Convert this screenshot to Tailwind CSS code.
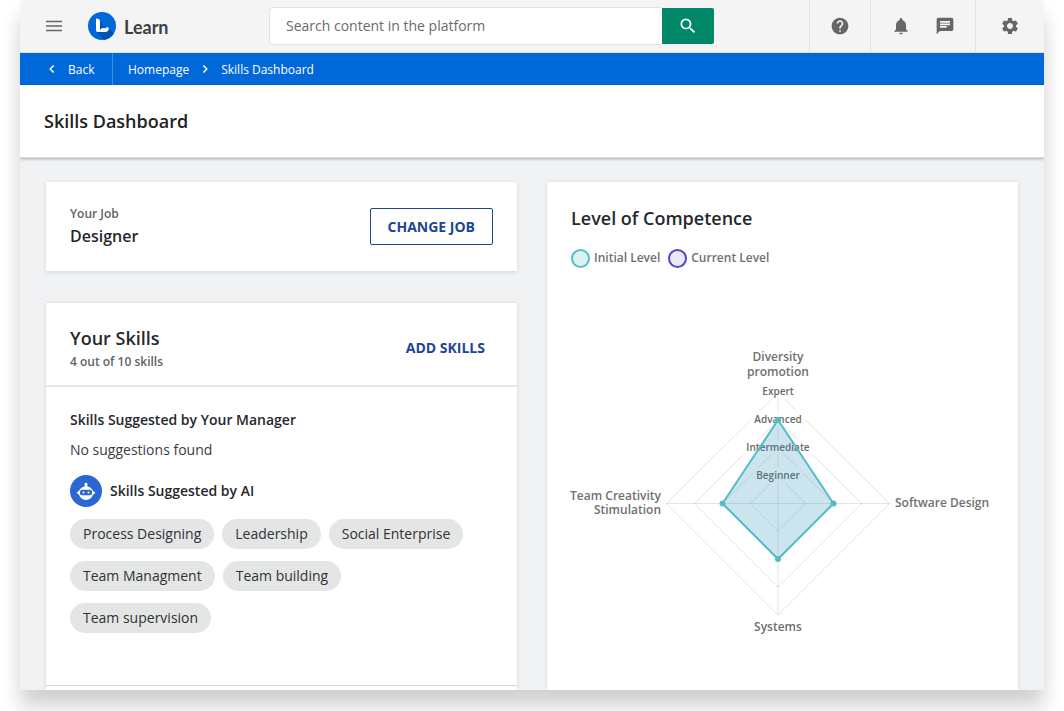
<!DOCTYPE html>
<html lang="en">
<head>
<meta charset="utf-8">
<meta name="viewport" content="width=device-width, initial-scale=1">
<title>Skills Dashboard</title>
<script src="https://cdn.jsdelivr.net/npm/@tailwindcss/browser@4"></script>
</head>
<body class="bg-white font-['Open_Sans',sans-serif] text-[#25282c]">
<div class="flex h-screen flex-col px-5 pb-[21px]">
<div class="flex min-h-0 flex-1 flex-col overflow-hidden rounded-t-md rounded-b-xs bg-[#f1f2f4] shadow-[0_16px_20px_rgba(0,0,0,0.19)]">

  <header class="flex h-[53px] shrink-0 items-center border-b border-[#e1e1e1] bg-[#f4f4f4] pl-6">
    <button type="button" aria-label="Menu" class="flex h-6 w-5 items-center justify-center">
      <svg class="h-3 w-4" viewBox="0 0 16 12" fill="none" stroke="#666" stroke-width="1.4" aria-hidden="true"><path d="M0 1.5h16M0 6h16M0 10.500h16"/></svg>
    </button>
    <a href="#" class="ml-6 flex w-[181px] items-center gap-2">
      <svg class="size-7" viewBox="0 0 28 28" aria-hidden="true">
        <defs><clipPath id="disc"><circle cx="14" cy="14" r="14"/></clipPath></defs>
        <circle cx="14" cy="14" r="14" fill="#0068d9"/>
        <path clip-path="url(#disc)" fill="#0052b4" d="M12 9 15.500 14.500 20.500 16.500 28 24V30H18L8.500 19.500Z"/>
        <path fill="#fff" d="M8 7.700C8 6.800 9 6.200 9.900 6.700L10.900 7.300C11.600 7.700 12 8.200 12 9V20H10C8.700 20 8 19.400 8 18.200Z"/>
        <path fill="#fff" d="M11.900 20C11.900 17.600 13.300 15.800 15.200 16.100L16.200 16.300C17.200 16.500 17.800 15.900 18.600 15.500C19.700 15 20.800 15.600 20.800 16.700C20.800 18.600 19.300 20 17.200 20Z"/>
      </svg>
      <span class="pt-0.5 font-['Lato',sans-serif] text-lg font-bold leading-6 text-[#3c3f45]">Learn</span>
    </a>
    <form class="flex h-[38px] w-[445px]" role="search">
      <input type="search" aria-label="Search" placeholder="Search content in the platform" class="min-w-0 flex-1 rounded-l-sm border border-r-0 border-[#e3e3e3] bg-white px-4 text-sm outline-none placeholder:text-[#6b6b6b]">
      <button type="submit" aria-label="Search" class="my-px flex w-[52px] items-center justify-center rounded-r-xs bg-[#008868]">
        <svg class="size-5" viewBox="0 0 24 24" fill="#fff" aria-hidden="true"><path d="M15.500 14h-.79l-.28-.27A6.471 6.471 0 0 0 16 9.500 6.500 6.500 0 1 0 9.500 16c1.610 0 3.090-.59 4.230-1.570l.27.28v.79l5 4.990L20.490 19l-4.990-5zm-6 0C7.010 14 5 11.990 5 9.500S7.010 5 9.500 5 14 7.010 14 9.500 11.990 14 9.500 14z"/></svg>
      </button>
    </form>
    <nav class="ml-auto flex self-stretch">
      <div class="flex w-[61px] items-center justify-center border-l border-[#e1e1e1]">
        <button type="button" aria-label="Help"><svg class="size-5" viewBox="0 0 24 24" fill="#666" aria-hidden="true"><path d="M12 2C6.480 2 2 6.480 2 12s4.480 10 10 10 10-4.480 10-10S17.520 2 12 2zm1 17h-2v-2h2v2zm2.070-7.750l-.9.920C13.450 12.900 13 13.500 13 15h-2v-.5c0-1.100.45-2.100 1.170-2.830l1.240-1.260c.37-.36.59-.86.59-1.410 0-1.100-.9-2-2-2s-2 .9-2 2H8c0-2.210 1.790-4 4-4s4 1.790 4 4c0 .88-.36 1.680-.93 2.250z"/></svg></button>
      </div>
      <div class="flex w-[105px] items-center justify-center gap-6 border-l border-[#e1e1e1]">
        <button type="button" aria-label="Notifications"><svg class="size-5" viewBox="0 0 24 24" fill="#666" aria-hidden="true"><path d="M12 22c1.100 0 2-.9 2-2h-4c0 1.100.89 2 2 2zm6-6v-5c0-3.070-1.640-5.640-4.500-6.320V4c0-.83-.67-1.500-1.500-1.500s-1.500.67-1.500 1.500v.68C7.630 5.360 6 7.920 6 11v5l-2 2v1h16v-1l-2-2z"/></svg></button>
        <button type="button" aria-label="Messages"><svg class="size-5" viewBox="0 0 24 24" fill="#666" aria-hidden="true"><path d="M20 2H4c-1.100 0-1.990.9-1.990 2L2 22l4-4h14c1.100 0 2-.9 2-2V4c0-1.100-.9-2-2-2zM6 9h12v2H6V9zm8 5H6v-2h8v2zm4-6H6V6h12v2z"/></svg></button>
      </div>
      <div class="flex w-[69px] items-center justify-center border-l border-[#e1e1e1]">
        <button type="button" aria-label="Settings"><svg class="size-5" viewBox="0 0 24 24" fill="#666" aria-hidden="true"><path d="M19.140 12.940c.04-.3.06-.61.06-.94 0-.32-.02-.64-.07-.94l2.030-1.580a.49.49 0 0 0 .12-.61l-1.920-3.320a.488.488 0 0 0-.59-.22l-2.390.96c-.5-.38-1.030-.7-1.620-.94l-.36-2.540a.484.484 0 0 0-.48-.41h-3.840c-.24 0-.43.17-.47.41l-.36 2.540c-.59.24-1.130.57-1.620.94l-2.390-.96c-.22-.08-.47 0-.59.22L2.740 8.870c-.12.21-.08.47.12.61l2.030 1.580c-.05.3-.09.63-.09.94s.02.64.07.94l-2.030 1.580a.49.49 0 0 0-.12.61l1.920 3.320c.12.22.37.29.59.22l2.390-.96c.5.38 1.030.7 1.620.94l.36 2.540c.05.24.24.41.48.41h3.840c.24 0 .44-.17.47-.41l.36-2.540c.59-.24 1.130-.56 1.620-.94l2.390.96c.22.08.47 0 .59-.22l1.920-3.320c.12-.22.07-.47-.12-.61l-2.010-1.580zM12 15.600c-1.980 0-3.600-1.620-3.600-3.600s1.620-3.600 3.600-3.600 3.600 1.620 3.600 3.600-1.620 3.600-3.600 3.600z"/></svg></button>
      </div>
    </nav>
  </header>

  <nav aria-label="Breadcrumb" class="flex h-8 shrink-0 items-center bg-[#0068d9] text-xs text-white">
    <a href="#" class="flex h-full w-[93px] items-center gap-3 border-r border-[#3d8de3] pl-7">
      <svg class="h-2 w-2" viewBox="0 0 8 8" fill="none" stroke="#fff" stroke-width="1.500" aria-hidden="true"><path d="M5.700.5 2.200 4l3.500 3.500"/></svg><span class="pt-0.5">Back</span></a>
    <a href="#" class="ml-[15px] pt-0.5">Homepage</a>
    <svg class="mx-3 h-2 w-2" viewBox="0 0 8 8" fill="none" stroke="#fff" stroke-width="1.500" aria-hidden="true"><path d="M2.300.5 5.800 4 2.300 7.500"/></svg>
    <a href="#" aria-current="page" class="pt-0.5">Skills Dashboard</a>
  </nav>

  <div class="z-10 flex h-[73px] shrink-0 items-center border-b border-[#dcdcdc] bg-white px-6 shadow-[0_1px_3px_rgba(0,0,0,0.3)]">
    <h1 class="text-lg font-semibold leading-6 text-[#222]">Skills Dashboard</h1>
  </div>

  <main class="grid min-h-0 flex-1 grid-cols-2 gap-[30px] px-[26px] pt-6">
    <div class="flex min-h-0 min-w-0 flex-col gap-8">
      <section class="flex h-[89px] shrink-0 items-center justify-between bg-white px-6 shadow-[0_1px_4px_rgba(0,0,0,0.13)]">
        <div>
          <p class="text-xs font-semibold leading-4 text-[#606368]">Your Job</p>
          <p class="mt-0.5 text-base font-semibold leading-6">Designer</p>
        </div>
        <button type="button" class="h-[37px] rounded-xs border border-[#1c4694] px-[17px] text-sm font-bold text-[#1c4694]">CHANGE JOB</button>
      </section>
      <section class="flex min-h-0 flex-1 flex-col bg-white shadow-[0_0_4px_rgba(0,0,0,0.13)]">
        <header class="flex h-[84px] shrink-0 items-center justify-between border-b-2 border-[#e4e6e9] pl-6 pr-8">
          <div class="pt-2">
            <h2 class="text-lg font-semibold leading-6">Your Skills</h2>
            <p class="mt-1 text-xs font-semibold leading-4 text-[#606368]">4 out of 10 skills</p>
          </div>
          <button type="button" class="pt-2 text-sm font-bold text-[#1c4694]">ADD SKILLS</button>
        </header>
        <div class="h-[298px] shrink-0 px-6 pt-[23px]">
          <h3 class="text-sm font-semibold leading-5">Skills Suggested by Your Manager</h3>
          <p class="mt-2.5 text-sm leading-5 text-[#3a3c40]">No suggestions found</p>
          <div class="mt-[15px] flex items-center gap-2">
            <svg class="size-8" viewBox="0 0 32 32" aria-hidden="true">
              <circle cx="16" cy="16" r="16" fill="#2b67d3"/>
              <g fill="#fff"><circle cx="16" cy="9.200" r="1.400"/><path d="M15 9h2l.5 2.500c2.500.5 4.500 2.200 5.400 4.300l1.800 1.200a1 1 0 0 1 0 1.600l-1.800 1.200c-.9 3-3.600 5.200-6.900 5.200s-6-2.200-6.900-5.200l-1.800-1.200a1 1 0 0 1 0-1.600l1.800-1.200c.9-2.100 2.900-3.800 5.400-4.300Z"/></g>
              <rect x="10" y="14.800" width="12" height="5.500" rx="2" fill="#2b67d3"/>
              <circle cx="13.500" cy="17.500" r="1" fill="#fff"/><circle cx="18.500" cy="17.500" r="1" fill="#fff"/>
            </svg>
            <h3 class="text-sm font-semibold leading-5">Skills Suggested by AI</h3>
          </div>
          <ul class="mt-3 flex flex-wrap gap-x-2 gap-y-3 text-sm leading-[30px] text-[#303236]">
            <li class="rounded-full bg-[#e4e5e5] px-[13px]">Process Designing</li>
            <li class="rounded-full bg-[#e4e5e5] px-[13px]">Leadership</li>
            <li class="rounded-full bg-[#e4e5e5] px-[13px]">Social Enterprise</li>
            <li class="rounded-full bg-[#e4e5e5] px-[13px]">Team Managment</li>
            <li class="mr-20 rounded-full bg-[#e4e5e5] px-[13px]">Team building</li>
            <li class="rounded-full bg-[#e4e5e5] px-[13px]">Team supervision</li>
          </ul>
        </div>
        <div class="flex-1 border-t border-[#d3d5d8]"></div>
      </section>
    </div>

    <section class="min-w-0 bg-white px-6 pt-6 shadow-[0_0_4px_rgba(0,0,0,0.13)]">
      <h2 class="text-lg font-semibold leading-6">Level of Competence</h2>
      <ul class="mt-[18px] flex items-center gap-2 text-xs font-semibold leading-5 text-[#707070]">
        <li class="flex items-center gap-1"><span class="size-[19px] rounded-full border-2 border-[#58bfc6] bg-[#dcf1f2]"></span>Initial Level</li>
        <li class="flex items-center gap-1"><span class="size-[19px] rounded-full border-2 border-[#5246cf] bg-[#ebeafa]"></span>Current Level</li>
      </ul>
      <svg class="mx-auto mt-[72px] block h-[300px] w-[422px] max-w-full overflow-visible" viewBox="1 0 422 300" role="img" aria-label="Competence by skill">
        <g fill="none" stroke="#000" stroke-opacity=".1">
          <path d="M207 52.500 318.500 163.500 207 275 95.500 163.500Z"/>
          <path d="M207 80 290.500 163.500 207 247 123.500 163.500Z"/>
          <path d="M207 108 262.500 163.500 207 219 151.500 163.500Z"/>
          <path d="M207 136 234.500 163.500 207 191 179.500 163.500Z"/>
          <path d="M207 52V275M95.500 163.500h223"/>
        </g>
        <g fill="#fff" fill-opacity=".75">
          <rect x="188" y="43" width="38" height="16"/><rect x="180" y="71" width="54" height="16"/><rect x="172" y="99" width="70" height="16"/><rect x="182" y="127" width="50" height="16"/>
        </g>
        <g class="text-[10px] font-semibold" fill="#6a6a6a" text-anchor="middle">
          <text x="207" y="55">Expert</text><text x="207" y="83">Advanced</text><text x="207" y="111">Intermediate</text><text x="207" y="139">Beginner</text>
        </g>
        <path d="M207 80 262.500 163.500 207 219 151.500 163.500Z" fill="#3393bd" fill-opacity=".25" stroke="#54bcc4" stroke-width="2"/>
        <g fill="#54bcc4"><circle cx="207" cy="80" r="3"/><circle cx="262.500" cy="163.500" r="3"/><circle cx="207" cy="219" r="3"/><circle cx="151.500" cy="163.500" r="3"/></g>
        <g class="text-xs font-semibold" fill="#707070">
          <text x="207" y="21" text-anchor="middle">Diversity</text><text x="207" y="36" text-anchor="middle">promotion</text>
          <text x="90" y="160" text-anchor="end">Team Creativity</text><text x="90" y="174" text-anchor="end">Stimulation</text>
          <text x="324" y="167">Software Design</text>
          <text x="207" y="291" text-anchor="middle">Systems</text>
        </g>
      </svg>
    </section>
  </main>
</div>
</div>
</body>
</html>
